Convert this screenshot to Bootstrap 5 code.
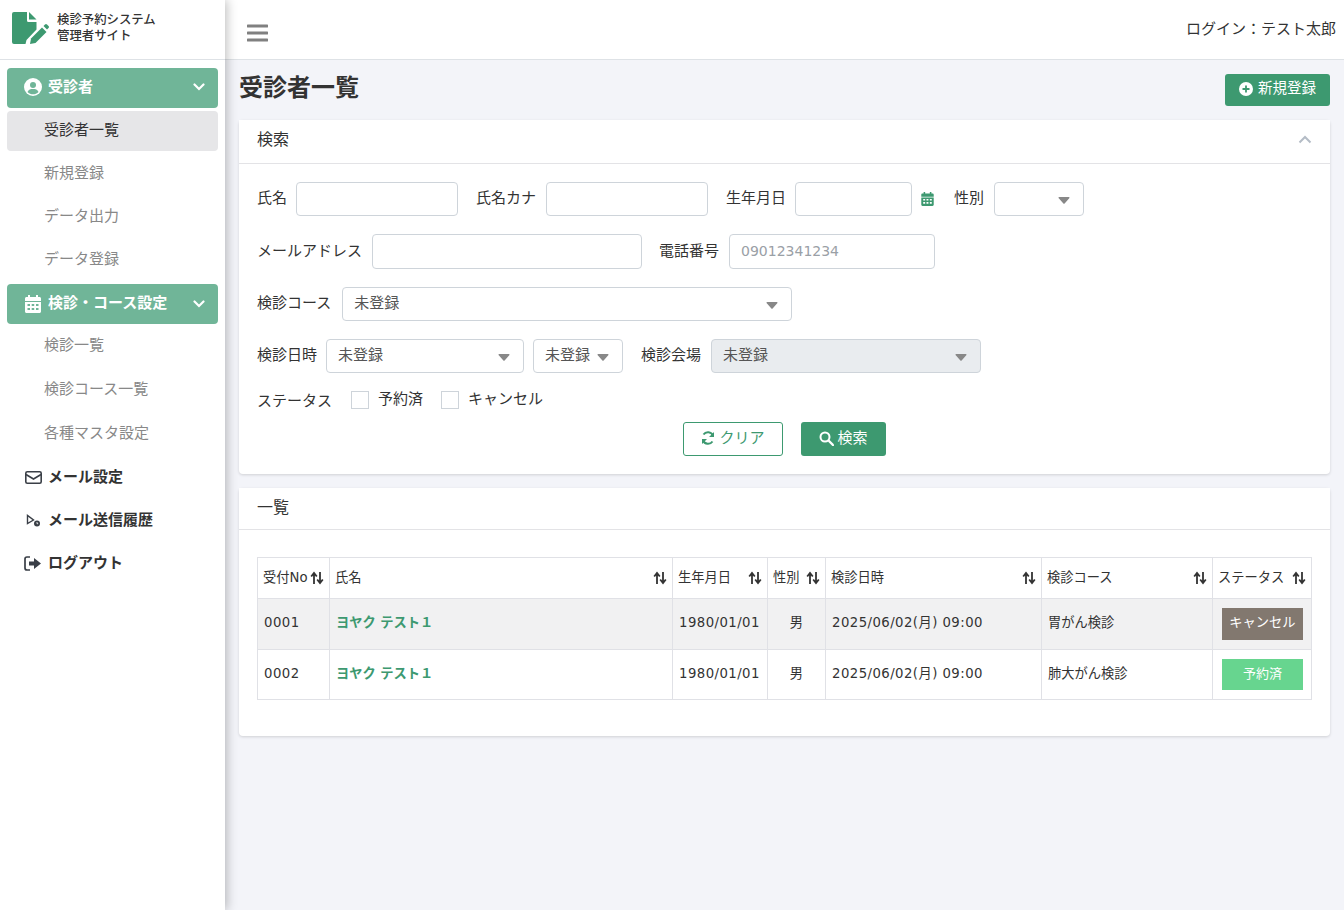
<!DOCTYPE html>
<html lang="ja"><head><meta charset="utf-8"><title>受診者一覧</title>
<link href="https://cdn.jsdelivr.net/npm/bootstrap@5.3.0/dist/css/bootstrap.min.css" rel="stylesheet">
<style>
body{font-family:"DejaVu Sans","Noto Sans CJK JP",sans-serif;font-size:15px;background:#f3f4f9;color:#333;height:910px;overflow:hidden}
.shell{height:910px}
.side{width:225px;flex:none;background:#fff;box-shadow:2px 0 10px rgba(0,0,0,.25);position:relative;z-index:2}
.brand{height:60px;border-bottom:1px solid #dee2e6;padding:0 0 3px 12px;gap:8px}
.brand-txt{font-size:12.4px;line-height:16px;font-weight:500;color:#333}
.menu{padding:8px 7px 0}
.mhead{height:40px;border-radius:4px;background:#70b598;color:#fff;font-weight:700;padding:0 13px 2px 17px;margin-bottom:3px}
.mhead .ic,.mtop .ic{width:18px;margin-right:6px;display:flex;justify-content:center}
.mhead2{margin-top:4px;margin-bottom:2px;padding-bottom:1px}
.msub{height:40px;border-radius:4px;padding:0 0 2px 37px;color:#888;margin-bottom:3px;text-decoration:none;display:flex;align-items:center}
.msub.on{background:#e6e6e8;color:#333}
.msub.wide{margin-bottom:4px;padding-bottom:1px}
.mtop{height:40px;padding:0 0 2px 17px;color:#333;font-weight:700;margin-bottom:3px}
.topbar{height:60px;background:#fff;border-bottom:1px solid #dee2e6;padding:0 8px 0 22px}
.burger{margin-top:6px}
.login{margin-top:0}
.page{padding:14px 14px 0}
.ttlrow{height:46px}
.ptitle{font-size:24px;font-weight:700;margin:0;color:#333;line-height:28px}
.gbtn{background:#3d9970;color:#fff;border:0;border-radius:3px;height:32px;width:105px;padding:0 0 2px;display:inline-flex;align-items:center;justify-content:center;gap:5px;font-size:14.5px}
.gbtn2{height:34px;width:85px;gap:3px;font-size:15px}
.obtn{background:#fff;color:#3d9970;border:1px solid #3d9970;border-radius:3px;height:34px;width:100px;padding:0 0 2px;display:inline-flex;align-items:center;justify-content:center;gap:4px}
.pcard{border:0;border-radius:4px;box-shadow:0 1px 3px rgba(0,0,0,.15);background:#fff;margin-bottom:14px}
.phead{background:#fff;padding:0 18px 4px;height:44px;border-bottom:1px solid #e3e3e6;font-size:16px;color:#333}
.phead2{height:42px;padding-bottom:2px}
.formbody{padding:18px;height:310px}
.frow{display:flex;align-items:center;height:34px;margin-bottom:18px;white-space:nowrap}
.frow2{height:35px}
.frow3{height:18px;margin-bottom:0}
.frow label{color:#333;padding-bottom:2px}
.frow2 label{padding-bottom:0}
.frow3 .lab0{padding:2px 0 0}
.fi{height:100%;border:1px solid #ced4da;border-radius:4px;font-size:15px;padding:0 11px 2px;background-color:#fff;color:#555}
input.fi{font-size:14px}
.fi::placeholder{color:#9aa0a6;opacity:1}
select.fi{-webkit-appearance:none;appearance:none;background-repeat:no-repeat;background-position:right 13px top 14px;background-size:12px 7px;background-image:url("data:image/svg+xml,%3Csvg xmlns='http://www.w3.org/2000/svg' viewBox='0 0 13 8'%3E%3Cpath fill='%23888' d='M1 0h11c1 0 1 1 .5 1.500L7.200 7.500c-.4.4-1 .4-1.400 0L.5 1.500C0 1 0 0 1 0z'/%3E%3C/svg%3E")}
select.fi:disabled{background-color:#e9ecef;opacity:1}
.cbx{width:18px;height:18px;border:1px solid #ced4da;background:#fff;flex:none}
.m9{margin-left:9px}.m10{margin-left:10px}.m11{margin-left:11px}.m17{margin-left:17px}.m18{margin-left:18px}.m19{margin-left:19px}.m20{margin-left:20px}
.w90{width:90px}.w117{width:117px}.w162{width:162px}.w198{width:198px}.w206{width:206px}.w270{width:270px}.w450{width:450px}
.acts{gap:18px;margin-top:13px}
.lst{padding:27px 18px 36px}
.tbl{table-layout:fixed;width:1054px;margin:0;border-color:#e0e1e6;font-size:13.25px;color:#333}
.tbl th{font-weight:400;padding:0 5px 1px;height:41px;vertical-align:middle;background:#fff;white-space:nowrap}
.tbl th .thin{display:flex;justify-content:space-between;align-items:center}
.tbl th svg{flex:none}
.tbl td{padding:0 6px 2px;vertical-align:middle;height:50px;background:#fff}
.tbl td.stc{padding-bottom:0}
.tbl tr.odd td{background:#f1f1f2;height:51px}
.num{letter-spacing:.45px}
.nm{color:#3d9970;font-weight:700;text-decoration:none}
.stat{display:block;color:#fff;text-align:center;width:81px;margin-left:3px}
.st-c{background:#82786f;height:32px;line-height:30px}
.st-y{background:#67d58f;height:31px;line-height:29px;font-size:13px}
.col1{width:72px}.col2{width:343px}.col3{width:95px}.col4{width:58px}.col5{width:216px}.col6{width:171px}.col7{width:99px}
</style></head>
<body>
<div class="d-flex shell">
<aside class="side">
  <div class="brand d-flex align-items-center">
    <svg width="37" height="33" viewBox="0 0 37 33"><path fill="#3d9970" d="M2 0h13v8.500Q15 10 16.500 10h8v7.500L14.500 28l-1 4H2Q0 32 0 30V2Q0 0 2 0z"/><path fill="#3d9970" d="M17 0l7.500 7.500H17z"/><path fill="#3d9970" d="M18 32l1-5.500L30 15.500l4.500 4.500L23.500 31z"/><path fill="#3d9970" d="M31.500 14l1.500-1.500q1-1 2 0l1.500 1.500q1 1 0 2L35 17.500z"/></svg>
    <div class="brand-txt">検診予約システム<br>管理者サイト</div>
  </div>
  <nav class="menu">
    <div class="mhead d-flex align-items-center"><span class="ic"><svg width="18" height="18" viewBox="0 0 18 18"><circle cx="9" cy="9" r="9" fill="#fff"/><circle cx="9" cy="7" r="3" fill="#70b598"/><path fill="#70b598" d="M3.500 14c1-2.500 3-3 5.500-3s4.500.5 5.500 3c-1.500 1.500-3.500 2.300-5.500 2.300S5 15.500 3.500 14z"/></svg></span>受診者<svg class="ms-auto" width="12" height="8" viewBox="0 0 12 8"><path d="M1.500 1.500 6 6l4.500-4.500" fill="none" stroke="#fff" stroke-width="2.200" stroke-linecap="round"/></svg></div>
    <a class="msub on" href="#">受診者一覧</a>
    <a class="msub" href="#">新規登録</a>
    <a class="msub" href="#">データ出力</a>
    <a class="msub" href="#">データ登録</a>
    <div class="mhead mhead2 d-flex align-items-center"><span class="ic"><svg width="16" height="18" viewBox="0 0 16 18"><path fill="#fff" d="M3 0h2v2h6V0h2v2h1.500c.8 0 1.500.7 1.500 1.500V6H0V3.500C0 2.700.7 2 1.500 2H3zM0 7h16v9.500c0 .8-.7 1.500-1.500 1.500h-13C.7 18 0 17.300 0 16.500z"/><path fill="#70b598" d="M2.500 9h2.500v2H2.500zM6.700 9h2.500v2H6.700zM11 9h2.500v2H11zM2.500 13h2.500v2H2.500zM6.700 13h2.500v2H6.700zM11 13h2.500v2H11z"/></svg></span>検診・コース設定<svg class="ms-auto" width="12" height="8" viewBox="0 0 12 8"><path d="M1.500 1.500 6 6l4.500-4.500" fill="none" stroke="#fff" stroke-width="2.200" stroke-linecap="round"/></svg></div>
    <a class="msub wide" href="#">検診一覧</a>
    <a class="msub wide" href="#">検診コース一覧</a>
    <a class="msub wide" href="#">各種マスタ設定</a>
    <div class="mtop d-flex align-items-center"><span class="ic"><svg width="17" height="13" viewBox="0 0 17 13"><rect x=".8" y=".8" width="15.400" height="11.400" rx="1.500" fill="none" stroke="#3a3f47" stroke-width="1.600"/><path d="M1 3.500 8.500 8 16 3.500" fill="none" stroke="#3a3f47" stroke-width="1.600"/></svg></span>メール設定</div>
    <div class="mtop d-flex align-items-center"><span class="ic"><svg width="15" height="13" viewBox="0 0 15 13"><path d="M1.500 1.500v8l6-3.500z" fill="none" stroke="#3a3f47" stroke-width="1.400"/><circle cx="11" cy="9.500" r="3" fill="#3a3f47"/><path d="M11 8v1.700h1.200" stroke="#fff" stroke-width=".8" fill="none"/></svg></span>メール送信履歴</div>
    <div class="mtop d-flex align-items-center"><span class="ic"><svg width="18" height="15" viewBox="0 0 18 15"><path d="M6 1H3C2 1 1 2 1 3v9c0 1 1 2 2 2h3" fill="none" stroke="#3a3f47" stroke-width="1.700"/><path fill="#3a3f47" d="M5 5.500h5V2l7 5.500-7 5.500V9.500H5z"/></svg></span>ログアウト</div>
  </nav>
</aside>
<div class="flex-grow-1">
  <header class="topbar d-flex align-items-center justify-content-between">
    <svg class="burger" width="21" height="18" viewBox="0 0 21 18"><path d="M1 2h19M1 9h19M1 16h19" stroke="#808080" stroke-width="3" stroke-linecap="round"/></svg>
    <div class="login">ログイン：テスト太郎</div>
  </header>
  <main class="page">
    <div class="d-flex justify-content-between align-items-start ttlrow">
      <h1 class="ptitle">受診者一覧</h1>
      <button class="gbtn" type="button"><svg width="14" height="14" viewBox="0 0 14 14"><circle cx="7" cy="7" r="7" fill="#fff"/><path d="M7 3.500v7M3.500 7h7" stroke="#3d9970" stroke-width="1.800"/></svg>新規登録</button>
    </div>
    <section class="card pcard">
      <div class="phead d-flex align-items-center justify-content-between"><span>検索</span><svg width="14" height="9" viewBox="0 0 14 9"><path d="M1.500 7.500 7 2l5.500 5.500" fill="none" stroke="#b4bcc6" stroke-width="2"/></svg></div>
      <div class="formbody">
        <div class="frow"><label>氏名</label><input class="fi w162 m9"><label class="m18">氏名カナ</label><input class="fi w162 m10"><label class="m18">生年月日</label><input class="fi w117 m9"><svg class="m9" width="13" height="14" viewBox="0 0 16 18"><path fill="#3d9970" d="M3 0h2v2h6V0h2v2h1.500c.8 0 1.500.7 1.500 1.500V6H0V3.500C0 2.700.7 2 1.500 2H3zM0 7h16v9.500c0 .8-.7 1.500-1.500 1.500h-13C.7 18 0 17.300 0 16.500z"/><path fill="#fff" d="M2.500 9h2.500v2H2.500zM6.700 9h2.500v2H6.700zM11 9h2.500v2H11zM2.500 13h2.500v2H2.500zM6.700 13h2.500v2H6.700zM11 13h2.500v2H11z"/></svg><label class="m20">性別</label><select class="fi w90 m10"><option></option></select></div>
        <div class="frow frow2"><label>メールアドレス</label><input class="fi w270 m10"><label class="m17">電話番号</label><input class="fi w206 m10" placeholder="09012341234"></div>
        <div class="frow"><label>検診コース</label><select class="fi w450 m11"><option>未登録</option></select></div>
        <div class="frow"><label>検診日時</label><select class="fi w198 m9"><option>未登録</option></select><select class="fi w90 m9"><option>未登録</option></select><label class="m18">検診会場</label><select class="fi w270 m10" disabled><option>未登録</option></select></div>
        <div class="frow frow3"><label class="lab0">ステータス</label><span class="cbx m19"></span><label class="m9">予約済</label><span class="cbx m18"></span><label class="m9">キャンセル</label></div>
        <div class="d-flex justify-content-center acts">
          <button class="obtn" type="button"><svg width="14" height="14" viewBox="0 0 14 14"><path d="M12 4.500A5.500 5.500 0 0 0 2.500 3.500M2 9.500a5.500 5.500 0 0 0 9.500 1" fill="none" stroke="#3d9970" stroke-width="2"/><path fill="#3d9970" d="M13 1v5H8zM1 13V8h5z"/></svg>クリア</button>
          <button class="gbtn gbtn2" type="button"><svg width="15" height="15" viewBox="0 0 15 15"><circle cx="6" cy="6" r="4.500" fill="none" stroke="#fff" stroke-width="2"/><path d="M9.500 9.500 14 14" stroke="#fff" stroke-width="2.400" stroke-linecap="round"/></svg>検索</button>
        </div>
      </div>
    </section>
    <section class="card pcard">
      <div class="phead phead2 d-flex align-items-center">一覧</div>
      <div class="lst">
        <table class="table table-bordered tbl">
          <colgroup><col class="col1"><col class="col2"><col class="col3"><col class="col4"><col class="col5"><col class="col6"><col class="col7"></colgroup>
          <thead><tr>
            <th><div class="thin">受付No<svg width="14" height="14"><use href="#sort"/></svg></div></th>
            <th><div class="thin">氏名<svg width="14" height="14"><use href="#sort"/></svg></div></th>
            <th><div class="thin">生年月日<svg width="14" height="14"><use href="#sort"/></svg></div></th>
            <th><div class="thin">性別<svg width="14" height="14"><use href="#sort"/></svg></div></th>
            <th><div class="thin">検診日時<svg width="14" height="14"><use href="#sort"/></svg></div></th>
            <th><div class="thin">検診コース<svg width="14" height="14"><use href="#sort"/></svg></div></th>
            <th><div class="thin">ステータス<svg width="14" height="14"><use href="#sort"/></svg></div></th>
          </tr></thead>
          <tbody>
            <tr class="odd"><td class="num">0001</td><td><a class="nm" href="#">ヨヤク テスト１</a></td><td class="num">1980/01/01</td><td class="text-center">男</td><td class="num">2025/06/02(月) 09:00</td><td>胃がん検診</td><td class="stc"><span class="stat st-c">キャンセル</span></td></tr>
            <tr><td class="num">0002</td><td><a class="nm" href="#">ヨヤク テスト１</a></td><td class="num">1980/01/01</td><td class="text-center">男</td><td class="num">2025/06/02(月) 09:00</td><td>肺大がん検診</td><td class="stc"><span class="stat st-y">予約済</span></td></tr>
          </tbody>
        </table>
      </div>
    </section>
  </main>
</div>
</div>
<svg width="0" height="0" class="position-absolute"><defs><symbol id="sort" viewBox="0 0 14 14"><path d="M4 13V3M1.200 5.500 4 2l2.800 3.500" fill="none" stroke="#333" stroke-width="1.800"/><path d="M10 1v10M7.200 8.500 10 12l2.800-3.500" fill="none" stroke="#333" stroke-width="1.800"/></symbol></defs></svg>
<script src="https://cdn.jsdelivr.net/npm/bootstrap@5.3.0/dist/js/bootstrap.bundle.min.js"></script>
</body></html>
